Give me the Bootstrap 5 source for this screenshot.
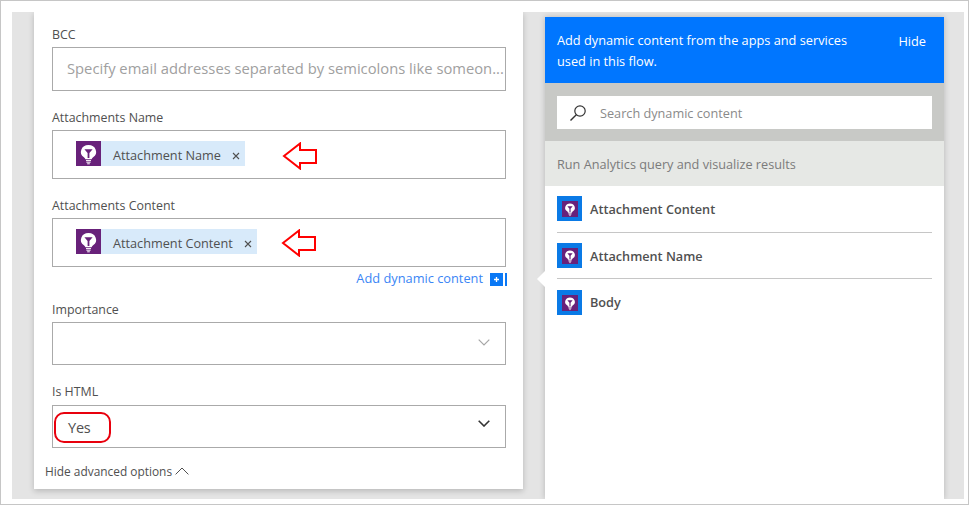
<!DOCTYPE html>
<html lang="en">
<head>
<meta charset="utf-8">
<title>Flow</title>
<link href="https://cdn.jsdelivr.net/npm/bootstrap@5.3.0/dist/css/bootstrap.min.css" rel="stylesheet">
<style>
html,body{height:505px;overflow:hidden;background:#fff;}
body{font-family:"Open Sans","Noto Sans",sans-serif;color:#505050;}
.frame{width:969px;height:505px;border:1px solid #c6c6c6;padding:11px 4px 5px 11px;overflow:hidden;}
.stage{height:100%;background:#e4e4e4;padding-left:22px;gap:22px;overflow:hidden;}
.formcard{width:489px;height:477px;background:#fff;box-shadow:0 2px 6px rgba(0,0,0,.2);padding:0 17px 0 18px;flex:none;}
.lbl{font-size:12.4px;line-height:17px;color:#505050;margin:0 0 4px;}
.fieldbox{border:1px solid #aaa;background:#fff;height:44px;}
.bcc{margin-top:14px;}
.bcc .fieldbox{padding-left:14px;font-size:14.75px;color:#a0a0a0;line-height:41px;white-space:nowrap;overflow:hidden;}
.tall{height:49px;padding:10px 0 0 23px;}
.gapa{margin-top:18px;}
.token{height:25px;background:#d8eafa;font-size:12.7px;color:#505050;padding-right:5px;}
.token span{padding-top:4px;}
.tkicon{width:25px;height:25px;margin-right:12px;flex:none;display:block;}
.tkx{margin-left:11px;margin-top:4px;display:block;}
.redarrow{display:block;}
.arrow-a{margin-left:37px;margin-top:1px;}
.arrow-b{margin-left:24px;}
.addrow{height:23px;font-size:12.8px;color:#3a85f5;margin-right:-1px;padding-top:1px;}
.plusbox{width:17px;height:13px;margin-left:7px;display:block;}
.selbox{padding:0 15px 0 0;height:43px;}
.chev-up{margin-bottom:3px;}
.chev-dark{margin-top:14px;}
.lbl-imp{margin-top:11px;}
.lbl-html{margin-top:18px;margin-bottom:5px;}
.yeswrap{border:2px solid #e8000d;border-radius:10px;width:57px;height:31px;margin:6px 0 0 1px;font-size:14.5px;line-height:27px;padding-left:12px;color:#505050;letter-spacing:-.2px;}
.hideadv{font-size:11.9px;margin:15px 0 0 -7px;color:#505050;line-height:16px;}
.hideadv svg{margin-left:3px;}
.dyn{width:399px;flex:none;background:#fff;box-shadow:0 0 6px rgba(0,0,0,.2);position:relative;margin-top:5px;}
.dyn::before{content:"";position:absolute;left:-8px;top:254px;border:8px solid transparent;border-left:0;border-right-color:#fff;}
.dynhead{height:66px;background:#0076ff;color:#fff;font-size:12.76px;line-height:21px;padding:13px 18px 0 12px;}
.dynhead .htext{width:310px;}
.hidebtn{margin-top:1px;}
.searchwrap{height:58px;background:#c8c9c6;padding:13px 12px;}
.searchbox{background:#fff;height:33px;font-size:12.7px;color:#8a8a8a;padding-left:12px;}
.searchbox span{padding-top:2px;}
.sicon{margin-right:13px;display:block;}
.grouphead{height:45px;background:#e6e8e5;font-size:12.7px;color:#7b7b7b;padding:15px 12px 0;line-height:17px;}
.dynlist{padding:0 12px;}
.dynitem{height:47px;border-bottom:1px solid #c6c6c6;font-size:12.7px;font-weight:600;color:#505050;}
.dynitem span{padding-top:2px;}
.dynitem.short{height:46px;}
.dynitem:last-child{border-bottom:0;}
.dynitem:last-child span{padding-top:0;}
.itemicon{width:25px;height:25px;margin-right:8px;margin-bottom:1px;flex:none;display:block;}
</style>
</head>
<body>
<svg width="0" height="0" class="d-block position-absolute">
  <defs>
    <symbol id="bulb" viewBox="0 0 25 25">
      <path d="M12.5 4a7.6 6.8 0 0 0-4.6 12.2c.8.7 1.3 1.2 1.5 2h6.2c.2-.8.7-1.3 1.5-2A7.6 6.8 0 0 0 12.5 4z" fill="#fff"/>
      <path d="M8.4 8.2h8.2l-3.2 3.8v5h-1.8v-5z" fill="#68217a"/>
      <path d="M10 19.6h5M10.4 21.2h4.2M11.2 22.8h2.6" stroke="#fff" stroke-width="1"/>
    </symbol>
  </defs>
</svg>
<div class="frame">
  <div class="stage d-flex">
    <div class="formcard">
      <div class="bcc">
        <p class="lbl">BCC</p>
        <div class="fieldbox">Specify email addresses separated by semicolons like someon...</div>
      </div>
      <div class="gapa">
        <p class="lbl">Attachments Name</p>
        <div class="fieldbox tall d-flex align-items-start">
          <div class="token d-flex align-items-center">
            <svg class="tkicon"><rect width="25" height="25" fill="#68217a"/><use href="#bulb" width="25" height="25"/></svg>
            <span>Attachment Name</span>
            <svg class="tkx" width="8" height="8" viewBox="0 0 8 8"><path d="M1 1l6 6M7 1L1 7" stroke="#505050" stroke-width="1.1"/></svg>
          </div>
          <svg class="redarrow arrow-a" width="36" height="28" viewBox="0 0 36 28"><path d="M2 14 18 1.5V8h16v13H18v5.5z" fill="#fff" stroke="#f00" stroke-width="2"/></svg>
        </div>
      </div>
      <div class="gapa">
        <p class="lbl">Attachments Content</p>
        <div class="fieldbox tall d-flex align-items-start">
          <div class="token d-flex align-items-center">
            <svg class="tkicon"><rect width="25" height="25" fill="#68217a"/><use href="#bulb" width="25" height="25"/></svg>
            <span>Attachment Content</span>
            <svg class="tkx" width="8" height="8" viewBox="0 0 8 8"><path d="M1 1l6 6M7 1L1 7" stroke="#505050" stroke-width="1.1"/></svg>
          </div>
          <svg class="redarrow arrow-b" width="36" height="28" viewBox="0 0 36 28"><path d="M2 14 18 1.5V8h16v13H18v5.5z" fill="#fff" stroke="#f00" stroke-width="2"/></svg>
        </div>
        <div class="addrow d-flex justify-content-end align-items-center">
          <span>Add dynamic content</span>
          <svg class="plusbox" viewBox="0 0 17 13"><rect width="13" height="13" fill="#0a78f5"/><rect x="15" width="2" height="13" fill="#0a78f5"/><path d="M6.5 4v5M4 6.5h5" stroke="#fff" stroke-width="1.3"/></svg>
        </div>
      </div>
      <div>
        <p class="lbl lbl-imp">Importance</p>
        <div class="fieldbox selbox d-flex justify-content-end align-items-center">
          <svg class="chev-up" width="12" height="7" viewBox="0 0 12 7"><path d="M.7.7 6 6l5.3-5.3" fill="none" stroke="#a6a6a6" stroke-width="1.2"/></svg>
        </div>
      </div>
      <div>
        <p class="lbl lbl-html">Is HTML</p>
        <div class="fieldbox selbox d-flex justify-content-between align-items-start">
          <div class="yeswrap">Yes</div>
          <svg class="chev-dark" width="12" height="7" viewBox="0 0 12 7"><path d="M.7.7 6 6l5.3-5.3" fill="none" stroke="#333" stroke-width="1.6"/></svg>
        </div>
      </div>
      <div class="hideadv d-flex align-items-center">
        <span>Hide advanced options</span>
        <svg width="14" height="8" viewBox="0 0 14 8"><path d="M.6 7.4 7 1l6.4 6.4" fill="none" stroke="#505050" stroke-width="1"/></svg>
      </div>
    </div>
    <div class="dyn">
      <div class="dynhead d-flex justify-content-between">
        <div class="htext">Add dynamic content from the apps and services used in this flow.</div>
        <div class="hidebtn">Hide</div>
      </div>
      <div class="searchwrap">
        <div class="searchbox d-flex align-items-center">
          <svg class="sicon" width="18" height="18" viewBox="0 0 18 18"><circle cx="11" cy="7" r="5.2" fill="none" stroke="#333" stroke-width="1.2"/><path d="M7.3 10.7 1.5 16.5" stroke="#333" stroke-width="1.4"/></svg>
          <span>Search dynamic content</span>
        </div>
      </div>
      <div class="grouphead">Run Analytics query and visualize results</div>
      <div class="dynlist">
        <div class="dynitem d-flex align-items-center">
          <svg class="itemicon"><rect width="25" height="25" fill="#0a7ae6"/><rect x="5" y="5" width="16" height="16" fill="#68217a"/><use href="#bulb" x="5" y="5" width="16" height="16"/></svg>
          <span>Attachment Content</span>
        </div>
        <div class="dynitem short d-flex align-items-center">
          <svg class="itemicon"><rect width="25" height="25" fill="#0a7ae6"/><rect x="5" y="5" width="16" height="16" fill="#68217a"/><use href="#bulb" x="5" y="5" width="16" height="16"/></svg>
          <span>Attachment Name</span>
        </div>
        <div class="dynitem d-flex align-items-center">
          <svg class="itemicon"><rect width="25" height="25" fill="#0a7ae6"/><rect x="5" y="5" width="16" height="16" fill="#68217a"/><use href="#bulb" x="5" y="5" width="16" height="16"/></svg>
          <span>Body</span>
        </div>
      </div>
    </div>
  </div>
</div>
<script src="https://cdn.jsdelivr.net/npm/bootstrap@5.3.0/dist/js/bootstrap.bundle.min.js"></script>
</body>
</html>
